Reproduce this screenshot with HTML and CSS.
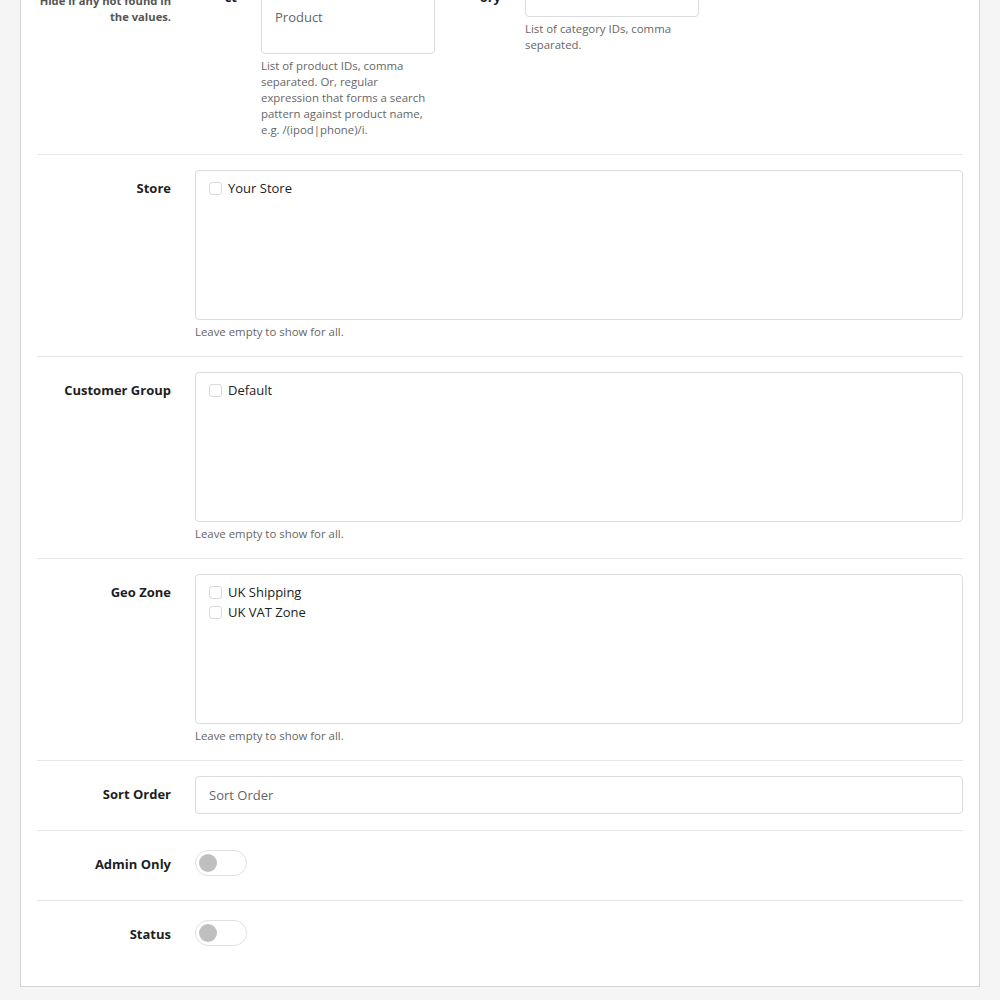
FILE: index.html
```html
<!DOCTYPE html>
<html lang="en">
<head>
<meta charset="utf-8">
<title>Module Settings</title>
<link rel="stylesheet" href="styles.css">
</head>
<body>
<div class="panel">
  <div class="row">
    <div class="label label-help">Hide if any not found in the values.</div>
    <div class="control">
      <div class="subcols">
        <div class="subcol">
          <div class="sublabel">Product</div>
          <div class="subcontrol">
            <textarea class="ta ta-product" placeholder="Product"></textarea>
            <div class="help">List of product IDs, comma separated. Or, regular expression that forms a search pattern against product name, e.g. /(ipod|phone)/i.</div>
          </div>
        </div>
        <div class="subcol">
          <div class="sublabel">Category</div>
          <div class="subcontrol">
            <textarea class="ta ta-category"></textarea>
            <div class="help">List of category IDs, comma separated.</div>
          </div>
        </div>
      </div>
    </div>
  </div>

  <div class="row">
    <div class="label">Store</div>
    <div class="control">
      <div class="checklist">
        <label class="check"><input type="checkbox" class="cb"><span>Your Store</span></label>
      </div>
      <div class="help">Leave empty to show for all.</div>
    </div>
  </div>

  <div class="row">
    <div class="label">Customer Group</div>
    <div class="control">
      <div class="checklist">
        <label class="check"><input type="checkbox" class="cb"><span>Default</span></label>
      </div>
      <div class="help">Leave empty to show for all.</div>
    </div>
  </div>

  <div class="row">
    <div class="label">Geo Zone</div>
    <div class="control">
      <div class="checklist">
        <label class="check"><input type="checkbox" class="cb"><span>UK Shipping</span></label>
        <label class="check"><input type="checkbox" class="cb"><span>UK VAT Zone</span></label>
      </div>
      <div class="help">Leave empty to show for all.</div>
    </div>
  </div>

  <div class="row">
    <div class="label">Sort Order</div>
    <div class="control">
      <input type="text" class="input" placeholder="Sort Order">
    </div>
  </div>

  <div class="row">
    <div class="label">Admin Only</div>
    <div class="control control-switch">
      <span class="switch"><span class="knob"></span></span>
    </div>
  </div>

  <div class="row">
    <div class="label">Status</div>
    <div class="control control-switch">
      <span class="switch"><span class="knob"></span></span>
    </div>
  </div>
</div>
</body>
</html>
```
FILE: styles.css
```css
html, body {
  margin: 0;
  background: #f5f5f5;
}

body {
  padding: 0 20px 14px;
  font-family: "Open Sans", "Liberation Sans", sans-serif;
  font-size: 13px;
  color: #1e1e1e;
}

.panel {
  margin-top: -70px;
  background: #fff;
  border: 1px solid #d4d4d4;
  padding: 16px;
}

.row {
  display: grid;
  grid-template-columns: 158px 1fr;
  padding: 15px 0 16px;
  border-bottom: 1px solid #e8e8e8;
}

.row:last-child {
  border-bottom: none;
}

.label {
  text-align: right;
  padding: 9px 24px 0 0;
  font-weight: 700;
  line-height: 18px;
  color: #1e1e1e;
}

.label-help {
  padding-top: 31px;
  font-size: 11.2px;
  line-height: 16px;
  font-weight: 700;
  color: #555;
}

.control {
  min-width: 0;
}

.subcols {
  display: flex;
  gap: 24px;
}

.subcol {
  display: flex;
}

.sublabel {
  width: 66px;
  flex: none;
  box-sizing: border-box;
  padding: 8px 24px 0 0;
  text-align: right;
  font-weight: 700;
  line-height: 18px;
  overflow-wrap: break-word;
}

.subcontrol {
  width: 174px;
}

.ta {
  display: block;
  width: 100%;
  box-sizing: border-box;
  border: 1px solid #dcdce1;
  border-radius: 4px;
  font-family: inherit;
  font-size: 13px;
  line-height: 20px;
  color: #333;
  padding: 8px 13px;
  margin: 0;
  resize: none;
}

.ta-product {
  height: 92px;
  padding-top: 44px;
}

.ta-category {
  height: 55px;
}

.ta::placeholder,
.input::placeholder {
  color: #666;
  opacity: 1;
}

.help {
  margin-top: 4px;
  font-size: 11.4px;
  line-height: 16px;
  color: #666;
}

.checklist {
  height: 150px;
  box-sizing: border-box;
  border: 1px solid #dcdce1;
  border-radius: 4px;
  padding: 7px 13px;
  overflow: auto;
}

.check {
  display: flex;
  align-items: center;
  gap: 6px;
  line-height: 20px;
  color: #222;
}

.cb {
  appearance: none;
  -webkit-appearance: none;
  width: 13px;
  height: 13px;
  margin: 0;
  border: 1px solid #d9d9de;
  border-radius: 3px;
  background: #fff;
  box-sizing: border-box;
}

.input {
  display: block;
  width: 100%;
  height: 38px;
  box-sizing: border-box;
  border: 1px solid #dcdce1;
  border-radius: 4px;
  padding: 0 13px;
  font-family: inherit;
  font-size: 13px;
  color: #333;
  margin: 0;
}

.control-switch {
  height: 38px;
  display: flex;
  align-items: flex-start;
  padding-top: 4px;
  box-sizing: border-box;
}

.switch {
  width: 52px;
  height: 26px;
  box-sizing: border-box;
  border: 1px solid #e0e0e0;
  border-radius: 13px;
  background: #fff;
  display: flex;
  align-items: center;
  padding-left: 3px;
}

.knob {
  width: 18px;
  height: 18px;
  border-radius: 50%;
  background: #bfbfbf;
}
```
